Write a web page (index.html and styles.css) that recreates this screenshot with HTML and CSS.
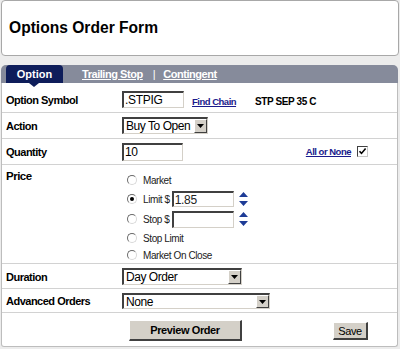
FILE: index.html
```html
<!DOCTYPE html>
<html>
<head>
<meta charset="utf-8">
<link rel="stylesheet" href="styles.css">
</head>
<body>
<div class="page">
  <div class="header"><h1>Options Order Form</h1></div>
  <div class="tabs">
    <div class="tab active">Option</div>
    <a class="tab link">Trailing Stop</a>
    <span class="sep">|</span>
    <a class="tab link">Contingent</a>
  </div>
  <div class="panel">
    <div class="row r-sym">
      <div class="label">Option Symbol</div>
      <div class="field">
        <span class="input w62">.STPIG</span>
        <a class="small-link find">Find Chain</a>
        <span class="desc">STP SEP 35 C</span>
      </div>
    </div>
    <div class="row r-act">
      <div class="label">Action</div>
      <div class="field">
        <span class="select w86"><span class="sel-text">Buy To Open</span><span class="sel-btn"><svg width="7" height="4" viewBox="0 0 7 4"><path d="M0 0h7L3.5 4z" fill="#000"/></svg></span></span>
      </div>
    </div>
    <div class="row r-qty">
      <div class="label">Quantity</div>
      <div class="field">
        <span class="input w61">10</span>
        <span class="spacer"></span>
        <a class="small-link aon">All or None</a>
        <span class="check"><svg width="9" height="9" viewBox="0 0 9 9"><path d="M1.5 4.2 3.5 6.4 7.6 1.6" stroke="#000" stroke-width="1.6" fill="none"/></svg></span>
      </div>
    </div>
    <div class="row r-price">
      <div class="label">Price</div>
      <div class="radios">
        <div class="opt"><span class="radio"></span><span class="opt-text">Market</span></div>
        <div class="opt tall"><span class="radio on"></span><span class="opt-text">Limit $</span><span class="input w62 price">1.85</span><span class="spin"><svg width="9" height="14" viewBox="0 0 9 14"><path d="M4.5 0 9 5H0z M0 9h9L4.5 14z" fill="#1e3c96"/></svg></span></div>
        <div class="opt tall"><span class="radio"></span><span class="opt-text">Stop $</span><span class="input w62 price"></span><span class="spin"><svg width="9" height="14" viewBox="0 0 9 14"><path d="M4.5 0 9 5H0z M0 9h9L4.5 14z" fill="#1e3c96"/></svg></span></div>
        <div class="opt"><span class="radio"></span><span class="opt-text">Stop Limit</span></div>
        <div class="opt"><span class="radio"></span><span class="opt-text">Market On Close</span></div>
      </div>
    </div>
    <div class="row r-dur">
      <div class="label">Duration</div>
      <div class="field">
        <span class="select w119"><span class="sel-text">Day Order</span><span class="sel-btn"><svg width="7" height="4" viewBox="0 0 7 4"><path d="M0 0h7L3.5 4z" fill="#000"/></svg></span></span>
      </div>
    </div>
    <div class="row r-adv">
      <div class="label">Advanced Orders</div>
      <div class="field">
        <span class="select w147"><span class="sel-text">None</span><span class="sel-btn"><svg width="7" height="4" viewBox="0 0 7 4"><path d="M0 0h7L3.5 4z" fill="#000"/></svg></span></span>
      </div>
    </div>
    <div class="row r-btn">
      <button class="btn preview">Preview Order</button>
      <button class="btn save">Save</button>
    </div>
  </div>
</div>
</body>
</html>
```

FILE: styles.css
```css
* { box-sizing: border-box; }
html, body { margin: 0; padding: 0; }
body {
  background: #ececec;
  font-family: "Liberation Sans", Arial, sans-serif;
  color: #000;
  width: 400px;
  height: 349px;
  overflow: hidden;
}
.page { padding: 0 1px 0 1px; }
.header {
  height: 56px;
  background: #fff;
  border: 1px solid #a8a8a8;
  border-radius: 4px;
  display: flex;
  align-items: center;
  padding-left: 7px;
}
.header h1 {
  margin: 0 0 1px 0;
  font-size: 15.6px;
  font-weight: bold;
}
.tabs {
  margin-top: 9px;
  height: 18px;
  background: #868b9b;
  border-radius: 5px 5px 0 0;
  margin-right: 1px;
  display: flex;
  align-items: center;
  font-size: 11px;
  letter-spacing: -0.45px;
  font-weight: bold;
  color: #fff;
}
.tab { color: #fff; }
.tab.active {
  position: relative;
  height: 18px;
  width: 57px;
  margin-left: 5px;
  background: #0e1d5a;
  border-radius: 4px 4px 0 0;
  display: flex;
  align-items: center;
  justify-content: center;
  letter-spacing: 0;
}
.tab.active::after {
  content: "";
  position: absolute;
  left: 23px;
  top: 18px;
  border-left: 5px solid transparent;
  border-right: 5px solid transparent;
  border-top: 4px solid #0e1d5a;
}
.tab.link { text-decoration: underline; }
.tabs a:nth-of-type(1) { margin-left: 19px; }
.sep { margin-left: 10px; margin-right: 8px; font-weight: normal; }
.panel {
  background: #fff;
  border: 1px solid #bdbdbd;
  border-top: none;
  margin-right: 1px;
  height: 264px;
  border-radius: 0 0 3px 3px;
}
.row {
  display: flex;
  align-items: center;
  border-bottom: 1px solid #d2d2d2;
}
.label {
  width: 120px;
  flex: none;
  padding-left: 4px;
  font-size: 11px;
  letter-spacing: -0.5px;
  font-weight: bold;
  white-space: nowrap;
}
.field { display: flex; align-items: center; flex: 1; }
.r-sym { height: 30px; padding-top: 4px; }
.r-act { height: 26px; }
.r-qty { height: 26px; }
.r-price { height: 99px; align-items: flex-start; }
.r-price .label { padding-top: 5px; font-size: 11.5px; }
.r-dur { height: 25px; padding-top: 1px; }
.r-adv { height: 24px; padding-top: 1px; }
.r-btn { height: 33px; border-bottom: none; padding-top: 1px; }
.input {
  display: inline-flex;
  align-items: center;
  height: 17px;
  background: #fff;
  border-style: solid;
  border-width: 2px 1px 1px 2px;
  border-color: #404040 #d4d0c8 #d4d0c8 #404040;
  font-size: 12px;
  letter-spacing: -0.3px;
  padding-left: 1px;
  flex: none;
  white-space: nowrap;
}
.w62 { width: 62px; }
.w61 { width: 61px; height: 18px; }
.small-link {
  color: #1a1a8c;
  text-decoration: underline;
  font-size: 9.5px;
  letter-spacing: -0.5px;
  font-weight: bold;
  white-space: nowrap;
}
.find { margin-left: 8px; margin-top: 3px; }
.desc {
  margin-left: 19px;
  font-size: 10px;
  letter-spacing: -0.4px;
  font-weight: bold;
  margin-top: 3px;
  white-space: nowrap;
}
.spacer { flex: 1; }
.check {
  width: 11px;
  height: 11px;
  border-style: solid;
  border-width: 1px;
  border-color: #404040 #c8c8c8 #c8c8c8 #404040;
  margin-left: 6px;
  margin-right: 29px;
  margin-top: -1px;
  display: inline-flex;
  align-items: center;
  justify-content: center;
  background: #fff;
}
.select {
  display: inline-flex;
  height: 17px;
  border-style: solid;
  border-width: 2px 1px 1px 2px;
  border-color: #404040 #d4d0c8 #d4d0c8 #404040;
  background: #fff;
  font-size: 12px;
  letter-spacing: -0.45px;
  align-items: stretch;
  white-space: nowrap;
  overflow: hidden;
}
.w86 { width: 86px; }
.w119 { width: 120px; }
.w147 { width: 148px; height: 16px; }
.sel-text { flex: 1; padding-left: 2px; display: flex; align-items: center; overflow: hidden; }
.sel-btn {
  width: 13px;
  flex: none;
  background: #d4d0c8;
  border-style: solid;
  border-width: 1px;
  border-color: #fff #404040 #404040 #fff;
  display: flex;
  align-items: center;
  justify-content: center;
}
.radios { padding-top: 6px; padding-left: 5px; }
.opt {
  display: flex;
  align-items: center;
  height: 18px;
  font-size: 10px;
  letter-spacing: -0.4px;
  color: #222;
  white-space: nowrap;
}
.opt.tall { height: 20px; }
.opt:last-child { margin-top: -1px; }
.radio {
  width: 10px;
  height: 10px;
  border-radius: 50%;
  border: 1px solid #808080;
  border-color: #6a6a6a #d8d8d8 #d8d8d8 #6a6a6a;
  background: #fff;
  margin-right: 6px;
  display: inline-flex;
  align-items: center;
  justify-content: center;
}
.radio.on::after {
  content: "";
  width: 4px;
  height: 4px;
  border-radius: 50%;
  background: #000;
}
.opt-text { margin-right: 2px; }
.price { height: 16px; }
.opt.tall:nth-child(3) .price { height: 17px; }
.spin { margin-left: 5px; display: inline-flex; }
.btn {
  font-family: "Liberation Sans", Arial, sans-serif;
  background: #d4d0c8;
  border-style: solid;
  border-width: 1px 2px 2px 1px;
  border-color: #fff #404040 #404040 #fff;
  font-size: 11px;
  letter-spacing: -0.4px;
  padding: 0;
  color: #000;
}
.preview {
  width: 113px;
  height: 21px;
  margin-left: 127px;
  font-weight: bold;
}
.save {
  width: 35px;
  height: 18px;
  margin-left: 91px;
  margin-top: 2px;
}
```
